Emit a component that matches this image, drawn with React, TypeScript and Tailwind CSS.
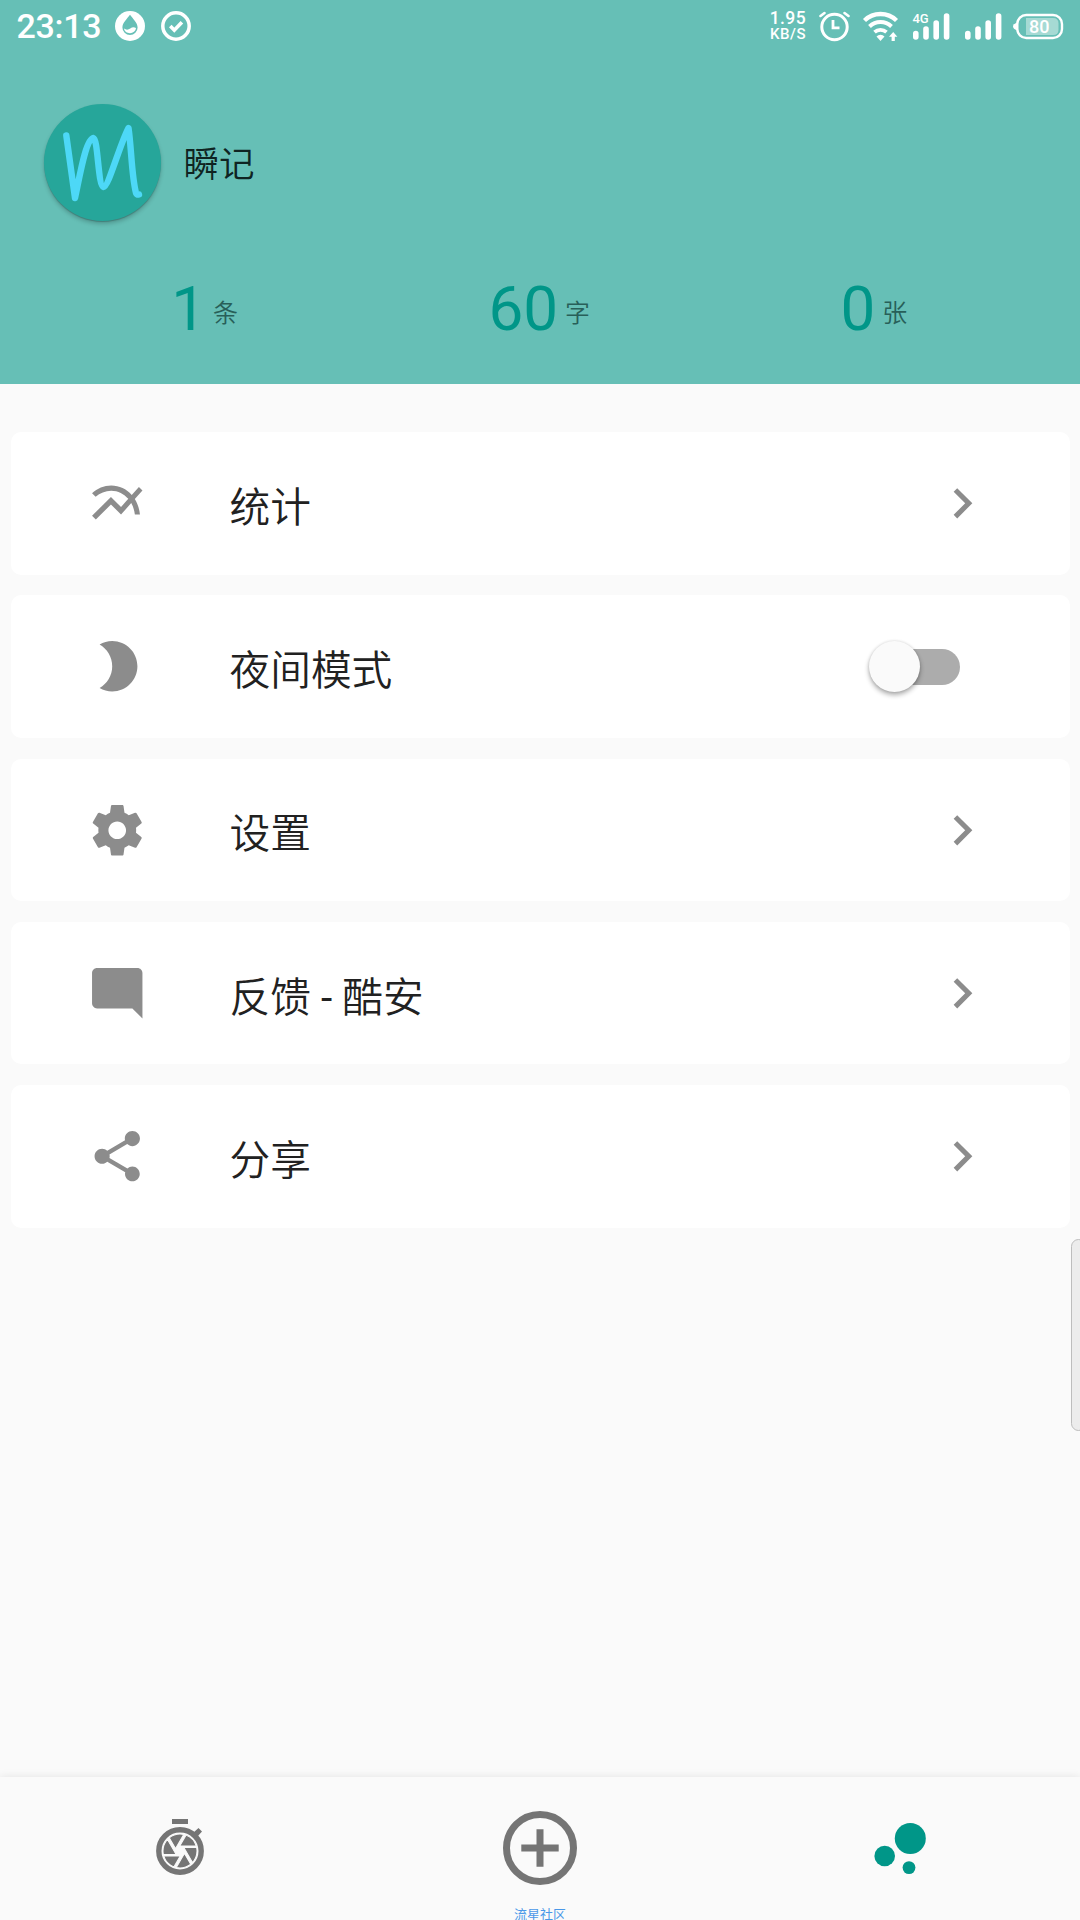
import type { ReactNode } from "react";

const MENU_FONT = "font-['Roboto','Noto_Sans_CJK_SC',sans-serif]";

function Glyph({ d }: { d: string }) {
  return (
    <svg viewBox="0 0 24 24" className="h-[60.5px] w-[60.5px] shrink-0 fill-[#8c8c8c]">
      <path d={d} />
    </svg>
  );
}

const icons = {
  chart:
    "M22 6.92l-1.41-1.41-2.85 3.21C15.68 6.4 12.83 5 9.61 5 6.72 5 4.07 6.16 2 8l1.42 1.42C5.12 7.93 7.27 7 9.61 7c2.74 0 5.09 1.26 6.77 3.24l-2.88 3.24-4-4L2 16.99l1.5 1.5 6-6.01 4 4 4.05-4.55c.75 1.35 1.25 2.9 1.44 4.55H21c-.22-2.3-.95-4.39-2.04-6.14L22 6.92z",
  moon: "M10 2c-1.82 0-3.53.5-5 1.35C7.99 5.08 10 8.3 10 12s-2.01 6.92-5 8.65C6.47 21.5 8.18 22 10 22c5.52 0 10-4.48 10-10S15.52 2 10 2z",
  gear: "M19.43 12.98c.04-.32.07-.64.07-.98s-.03-.66-.07-.98l2.11-1.65c.19-.15.24-.42.12-.64l-2-3.46c-.12-.22-.39-.3-.61-.22l-2.49 1c-.52-.4-1.08-.73-1.69-.98l-.38-2.65C14.46 2.18 14.25 2 14 2h-4c-.25 0-.46.18-.49.42l-.38 2.65c-.61.25-1.17.59-1.69.98l-2.49-1c-.23-.09-.49 0-.61.22l-2 3.46c-.13.22-.07.49.12.64l2.11 1.65c-.04.32-.07.65-.07.98s.03.66.07.98l-2.11 1.65c-.19.15-.24.42-.12.64l2 3.46c.12.22.39.3.61.22l2.49-1c.52.4 1.08.73 1.69.98l.38 2.65c.03.24.24.42.49.42h4c.25 0 .46-.18.49-.42l.38-2.65c.61-.25 1.17-.59 1.69-.98l2.49 1c.23.09.49 0 .61-.22l2-3.46c.12-.22.07-.49-.12-.64l-2.11-1.65zM12 15.5c-1.93 0-3.5-1.57-3.5-3.5s1.57-3.5 3.5-3.5 3.5 1.57 3.5 3.5-1.57 3.5-3.5 3.5z",
  comment: "M21.99 4c0-1.1-.89-2-1.99-2H4c-1.1 0-2 .9-2 2v12c0 1.1.9 2 2 2h14l4 4-.01-18z",
  share:
    "M18 16.08c-.76 0-1.44.3-1.96.77L8.91 12.7c.05-.23.09-.46.09-.7s-.04-.47-.09-.7l7.05-4.11c.54.5 1.25.81 2.04.81 1.66 0 3-1.34 3-3s-1.34-3-3-3-3 1.34-3 3c0 .24.04.47.09.7L8.04 9.81C7.5 9.31 6.79 9 6 9c-1.66 0-3 1.34-3 3s1.34 3 3 3c.79 0 1.5-.31 2.04-.81l7.12 4.16c-.05.21-.08.43-.08.65 0 1.61 1.31 2.92 2.92 2.92 1.61 0 2.92-1.31 2.92-2.92s-1.31-2.92-2.92-2.92z",
  chevron: "M10 6L8.59 7.41 13.17 12l-4.58 4.59L10 18l6-6z",
};

function StatusBar() {
  return (
    <div className="flex h-[52px] items-center justify-between pr-[16px] pl-[16.5px] text-white">
      <div className="flex items-center">
        <span className="w-[98.5px] text-[34px] leading-[52px] font-medium tracking-[-0.3px]">23:13</span>
        <svg viewBox="0 0 30 30" className="h-[30px] w-[30px]">
          <circle cx="15" cy="15" r="15" fill="#fff" />
          <path d="M15 3.8C18 8 22.6 12 22.6 16.4a7.6 7.6 0 0 1-15.2 0C7.4 12 12 8 15 3.8z" fill="#66bfb6" />
          <path d="M9 17.6c2.4 1.8 4.4 1.2 6.2 0s3.8-1.8 5.8-.5c-.4 3.2-3 5.1-6 5.1s-5.6-1.7-6-4.6z" fill="#fff" />
        </svg>
        <svg viewBox="0 0 30 30" fill="none" stroke="#fff" className="ml-[16px] h-[30px] w-[30px]">
          <circle cx="15" cy="15" r="13.2" strokeWidth="3.5" />
          <path d="M9.3 15l4 4.2 7.6-8" strokeWidth="3.6" />
        </svg>
      </div>
      <div className="flex items-center">
        <div className="flex w-[38px] flex-col items-end text-right font-medium">
          <span className="text-[17.5px] leading-[16px] tracking-[0.4px]">1.95</span>
          <span className="text-[15px] leading-[16px] tracking-[0.5px]">KB/S</span>
        </div>
        <svg viewBox="819 10 31 31" fill="none" stroke="#fff" className="ml-[13px] h-[31px] w-[31px]">
          <circle cx="834.5" cy="26" r="12.7" strokeWidth="3" />
          <path d="M833 19v7.8h6.5" strokeWidth="2.8" />
          <path d="M820.5 15l4-3M848.5 15l-4-3" strokeWidth="2.6" strokeLinecap="round" />
        </svg>
        <svg viewBox="862 10 37 31" fill="none" stroke="#fff" className="ml-[12px] h-[31px] w-[37px]">
          <path d="M864.5 19.5a23 23 0 0 1 32 0" strokeWidth="4.4" />
          <path d="M869.5 25.5a16 16 0 0 1 22 0" strokeWidth="4" />
          <path d="M874.5 31.2a9 9 0 0 1 12 0" strokeWidth="3.8" />
          <path d="M876.5 35.5a5.5 5.5 0 0 1 8 0l-4 4.5z" fill="#fff" stroke="none" />
          <path d="M893.2 31l4.2 4.7h-2.6V40h-3.2v-4.3H889z" fill="#fff" stroke="none" />
        </svg>
        <svg viewBox="912 10 38 31" stroke="#fff" strokeWidth="5.6" strokeLinecap="round" className="ml-[13px] h-[31px] w-[38px]">
          <path d="M915.8 32.5v3.5M926 28v8M936.2 22v14M946.6 15v21" />
          <text x="912.5" y="22" fill="#fff" stroke="none" fontSize="13" fontWeight="500" textLength="16">4G</text>
        </svg>
        <svg viewBox="964 10 38 31" stroke="#fff" strokeWidth="5.6" strokeLinecap="round" className="ml-[14px] h-[31px] w-[38px]">
          <path d="M967.8 32.5v3.5M978 28v8M988.2 22v14M998.6 15v21" />
        </svg>
        <svg viewBox="1012 10 52 31" className="ml-[10px] h-[31px] w-[52px]">
          <path d="M1017 21.5v8l-3-1.8q-2-2.2 0-4.4z" fill="#fff" />
          <rect x="1017.3" y="14" width="44.7" height="23" rx="9" fill="none" stroke="#fff" strokeWidth="2.4" />
          <path d="M1026 17h27q5.5 0 5.5 5.5v6q0 5.5-5.5 5.5h-27z" fill="#fff" fillOpacity=".42" />
          <text x="1029" y="32" fill="#fff" fontSize="18" fontWeight="500" textLength="20.5">80</text>
        </svg>
      </div>
    </div>
  );
}

function Stat({ value, unit }: { value: string; unit: string }) {
  return (
    <div className="flex items-start justify-center gap-[7px] pr-[1.5px]">
      <span className="text-[62px] leading-[76px] text-[#009688]">{value}</span>
      <span className="pt-[18px] text-[25px] leading-[50px] font-[350] text-[#285f59]">{unit}</span>
    </div>
  );
}

function Row({ icon, label, end }: { icon: string; label: ReactNode; end?: ReactNode }) {
  return (
    <div className="flex h-[142.5px] items-center rounded-[10px] bg-white pr-[77px] pl-[76.5px]">
      <Glyph d={icon} />
      <span className="ml-[82px] flex-1 pt-[9px] text-[40.7px] leading-[60px] font-[350] whitespace-pre text-[#212121]">{label}</span>
      {end ?? <Glyph d={icons.chevron} />}
    </div>
  );
}

function Switch() {
  return (
    <div className="mr-[34px] flex h-[36px] w-[90px] items-center rounded-full">
      <div className="z-10 h-[51px] w-[51px] shrink-0 rounded-full bg-[#fafafa] shadow-[0_3px_5px_rgba(0,0,0,0.32),0_0_3px_rgba(0,0,0,0.12)]" />
      <div className="-ml-[30px] h-[36px] w-[70px] shrink-0 rounded-full bg-[#acacac]" />
    </div>
  );
}

export default function App() {
  return (
    <div className={`relative flex h-[1920px] w-[1080px] flex-col overflow-hidden bg-[#fafafa] ${MENU_FONT}`}>
      <header className="h-[384px] bg-[#66bfb6]">
        <StatusBar />
        <div className="mt-[52px] flex items-center pl-[43.5px]">
          <div className="h-[117px] w-[117px] rounded-full bg-[#26a69a] shadow-[0_3px_4px_rgba(0,0,0,0.2),0_1px_1px_rgba(0,0,0,0.2)]">
            <svg viewBox="43.5 104 117 117" fill="none" className="h-[117px] w-[117px]">
              <path
                d="M65.8 135.5L74.5 198C79 178 85 139 93 138C97.500 139 97.500 186 103 187C108 187 119 145 128 128C131 148 131 176 135.5 193Q136.500 195 138.500 194.500"
                stroke="#4dd8f7"
                strokeWidth="6.4"
                strokeLinecap="round"
                strokeLinejoin="round"
              />
            </svg>
          </div>
          <span className="ml-[23px] pt-[5px] text-[35.5px] leading-[52px] font-[350] text-[#0f2422]">瞬记</span>
        </div>
        <div className="mt-[50px] grid grid-cols-3 px-[38px]">
          <Stat value="1" unit="条" />
          <Stat value="60" unit="字" />
          <Stat value="0" unit="张" />
        </div>
      </header>

      <main className="flex flex-1 flex-col gap-[20.7px] px-[10.5px] pt-[48.3px]">
        <Row icon={icons.chart} label="统计" />
        <Row icon={icons.moon} label="夜间模式" end={<Switch />} />
        <Row icon={icons.gear} label="设置" />
        <Row
          icon={icons.comment}
          label={
            <>
              反馈<span className="font-normal"> - </span>酷安
            </>
          }
        />
        <Row icon={icons.share} label="分享" />
      </main>

      <nav className="grid h-[143px] grid-cols-3 justify-items-center bg-[#fafafa] shadow-[0_-1px_8px_rgba(0,0,0,0.08)]">
        <svg viewBox="150 1811 60 74" fill="#757575" className="mt-[34px] h-[74px] w-[60px]">
          <path d="M172 1819h16v5h-16zM193.5 1832.5l5-4.5 3.5 3.5-4.5 5z" />
          <circle cx="180" cy="1851" r="21.2" fill="none" stroke="#757575" strokeWidth="5.4" />
          <path
            transform="translate(159.6 1830.6) scale(1.7)"
            stroke="#fafafa"
            strokeWidth=".6"
            d="M9.4 10.5l4.77-8.26C13.47 2.09 12.75 2 12 2c-2.4 0-4.6.85-6.32 2.25l3.66 6.35.06-.1zM21.54 9c-.92-2.92-3.15-5.26-6-6.34L11.88 9h9.66zm.26 1h-7.49l.29.5 4.76 8.25C21 16.97 22 14.61 22 12c0-.69-.07-1.35-.2-2zM8.54 12l-3.9-6.75C3.01 7.03 2 9.39 2 12c0 .69.07 1.35.2 2h7.49l-1.15-2zm-6.08 3c.92 2.92 3.15 5.26 6 6.34L12.12 15H2.46zm11.27 0l-3.9 6.76c.7.15 1.42.24 2.17.24 2.4 0 4.6-.85 6.32-2.25l-3.66-6.35-.93 1.6z"
          />
        </svg>
        <svg viewBox="0 0 74 74" fill="none" stroke="#757575" strokeWidth="7" className="mt-[34px] h-[74px] w-[74px]">
          <circle cx="37" cy="37" r="33.5" />
          <path d="M37 18.3v37.4M18.3 37h37.4" />
        </svg>
        <svg viewBox="870 1811 60 74" fill="#009688" className="mt-[34px] h-[74px] w-[60px]">
          <circle cx="910.3" cy="1838.5" r="15.5" />
          <circle cx="884.7" cy="1856" r="10.3" />
          <circle cx="909" cy="1867.6" r="6.4" />
        </svg>
      </nav>

      <span className="absolute top-[1906px] left-[514px] text-[13px] leading-[18px] text-[#4a98e8]">流星社区</span>
      <div className="absolute top-[1239px] -right-[6px] h-[192px] w-[15px] rounded-[9px] border border-[#bdbdbd] bg-[#ececec]" />
    </div>
  );
}
